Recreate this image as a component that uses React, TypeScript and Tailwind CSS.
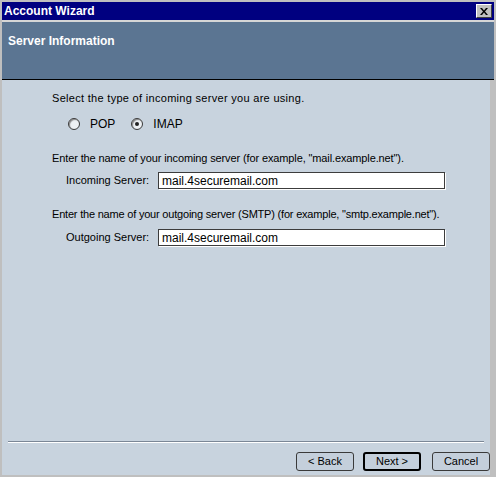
import { useState } from 'react';

const font = { fontFamily: '"Liberation Sans", Arial, sans-serif' };

function Radio({ checked, label, onClick }: { checked: boolean; label: string; onClick: () => void }) {
  return (
    <button className="flex items-center gap-[10px]" onClick={onClick}>
      <span className="w-[12px] h-[12px] rounded-full border border-[#3a3a3a] bg-[#eef1f4] shadow-[inset_1px_1px_1px_#8a8a8a] flex items-center justify-center">
        {checked && <span className="w-[4px] h-[4px] rounded-full bg-[#222]" />}
      </span>
      <span className="text-[12px] text-black">{label}</span>
    </button>
  );
}

function Field({ label, value, onChange }: { label: string; value: string; onChange: (v: string) => void }) {
  return (
    <div className="flex items-center">
      <span className="w-[106px] shrink-0 whitespace-nowrap pl-[14px] text-[11px] text-black">{label}</span>
      <input
        className="w-[287px] h-[17px] bg-white border border-[#3c3c3c] shadow-[1px_1px_0_#ffffff] px-[3px] text-[12px] text-black outline-none"
        value={value}
        onChange={(e) => onChange(e.target.value)}
      />
    </div>
  );
}

function Btn({ children, primary }: { children: string; primary?: boolean }) {
  return (
    <button
      className={
        'w-[58px] h-[19px] rounded-[3px] bg-[#c4cfdb] text-[11px] text-black flex items-center justify-center ' +
        (primary ? 'border-2 border-black' : 'border border-[#3a3a3a]')
      }
    >
      {children}
    </button>
  );
}

export default function App() {
  const [type, setType] = useState('imap');
  const [inc, setInc] = useState('mail.4securemail.com');
  const [out, setOut] = useState('mail.4securemail.com');

  return (
    <div className="w-[496px] h-[477px] bg-[#bfbfbf] p-[2px] flex flex-col" style={font}>
      <div className="h-[18px] bg-[#000080] flex items-center justify-between pl-[2px] pr-[2px]">
        <span className="text-[12px] font-bold text-white">Account Wizard</span>
        <button className="w-[16px] h-[14px] bg-[#c0c0c0] border border-t-white border-l-white border-r-[#404040] border-b-[#404040] flex items-center justify-center">
          <svg width="8" height="7" viewBox="0 0 8 7">
            <path d="M0 0h2l2 2.5L6 0h2L5 3.5 8 7H6L4 4.5 2 7H0l3-3.5z" fill="#000" />
          </svg>
        </button>
      </div>
      <div className="h-[2px] bg-[#d6d6d6]" />
      <div className="h-[58px] bg-[#5b7592] border-b border-black pl-[6px] pt-[12px] w-[492px]">
        <div className="text-[12px] leading-[14px] font-bold text-white">Server Information</div>
      </div>
      <div className="flex-1 bg-[#c8d3de] w-[488px] flex flex-col">
        <div className="pl-[50px] pt-[12px] flex flex-col">
          <div className="text-[11px] text-black leading-[13px] tracking-[0.3px]">
            Select the type of incoming server you are using.
          </div>
          <div className="flex gap-[16px] ml-[16px] mt-[13px] h-[12px]">
            <Radio checked={type === 'pop'} label="POP" onClick={() => setType('pop')} />
            <Radio checked={type === 'imap'} label="IMAP" onClick={() => setType('imap')} />
          </div>
          <div className="text-[11px] text-black leading-[13px] mt-[22px] tracking-[-0.12px]">
            Enter the name of your incoming server (for example, "mail.example.net").
          </div>
          <div className="mt-[7px]">
            <Field label="Incoming Server:" value={inc} onChange={setInc} />
          </div>
          <div className="text-[11px] text-black leading-[13px] mt-[19px] tracking-[-0.2px]">
            Enter the name of your outgoing server (SMTP) (for example, "smtp.example.net").
          </div>
          <div className="mt-[8px]">
            <Field label="Outgoing Server:" value={out} onChange={setOut} />
          </div>
        </div>
        <div className="flex-1" />
        <div className="mx-[6px] border-t border-[#7b8796] border-b border-b-white" />
        <div className="flex justify-end pr-[0px] pt-[9px] pb-[4px]">
          <Btn>&lt; Back</Btn>
          <span className="w-[9px]" />
          <Btn primary>Next &gt;</Btn>
          <span className="w-[11px]" />
          <Btn>Cancel</Btn>
        </div>
      </div>
    </div>
  );
}
